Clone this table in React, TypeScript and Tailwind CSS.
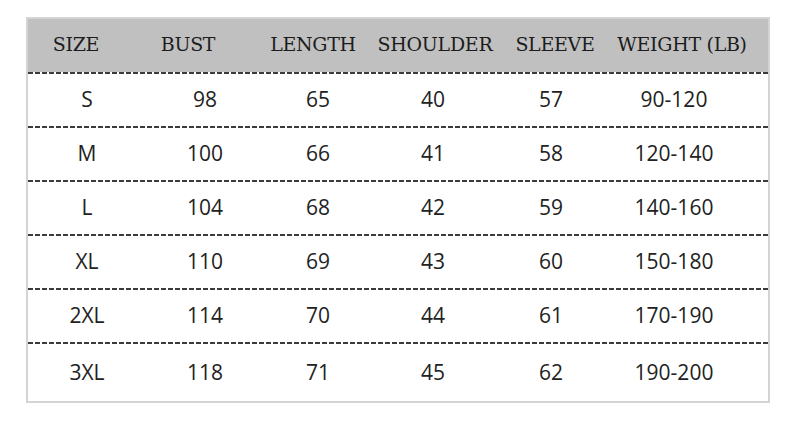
import React from "react";

const rows = [
  ["S", "98", "65", "40", "57", "90-120"],
  ["M", "100", "66", "41", "58", "120-140"],
  ["L", "104", "68", "42", "59", "140-160"],
  ["XL", "110", "69", "43", "60", "150-180"],
  ["2XL", "114", "70", "44", "61", "170-190"],
  ["3XL", "118", "71", "45", "62", "190-200"],
];

const headers = ["SIZE", "BUST", "LENGTH", "SHOULDER", "SLEEVE", "WEIGHT (LB)"];

function Dash() {
  return (
    <div className="h-[2px] w-full bg-[repeating-linear-gradient(90deg,#3c3c3c_0_5px,transparent_5px_7px)]" />
  );
}

export default function App() {
  return (
    <div className="w-[789px] h-[421px] bg-white pt-[17px] pl-[26px]">
      <div className="w-[744px] h-[386px] border-2 border-[#d4d4d4] flex flex-col">
        <div
          className="h-[53px] bg-[#c0c0c0] grid grid-cols-[96px_128px_122px_122px_118px_136px] items-center pb-[3px] text-[19px] text-[#1c1c1c] tracking-[-0.3px]"
          style={{ fontFamily: '"DejaVu Serif", serif' }}
        >
          {headers.map((h) => (
            <div key={h} className="text-center whitespace-nowrap">
              {h}
            </div>
          ))}
        </div>
        {rows.map((r, i) => (
          <div key={i} className={`flex flex-col ${i === rows.length - 1 ? "flex-1" : "h-[54px]"}`}>
            <Dash />
            <div
              className="flex-1 grid grid-cols-[118px_118px_108px_122px_114px_132px] items-center text-[21px] text-[#222]"
              style={{ fontFamily: '"Open Sans", sans-serif' }}
            >
              {r.map((c, j) => (
                <div key={j} className="text-center">
                  {c}
                </div>
              ))}
            </div>
          </div>
        ))}
      </div>
    </div>
  );
}
